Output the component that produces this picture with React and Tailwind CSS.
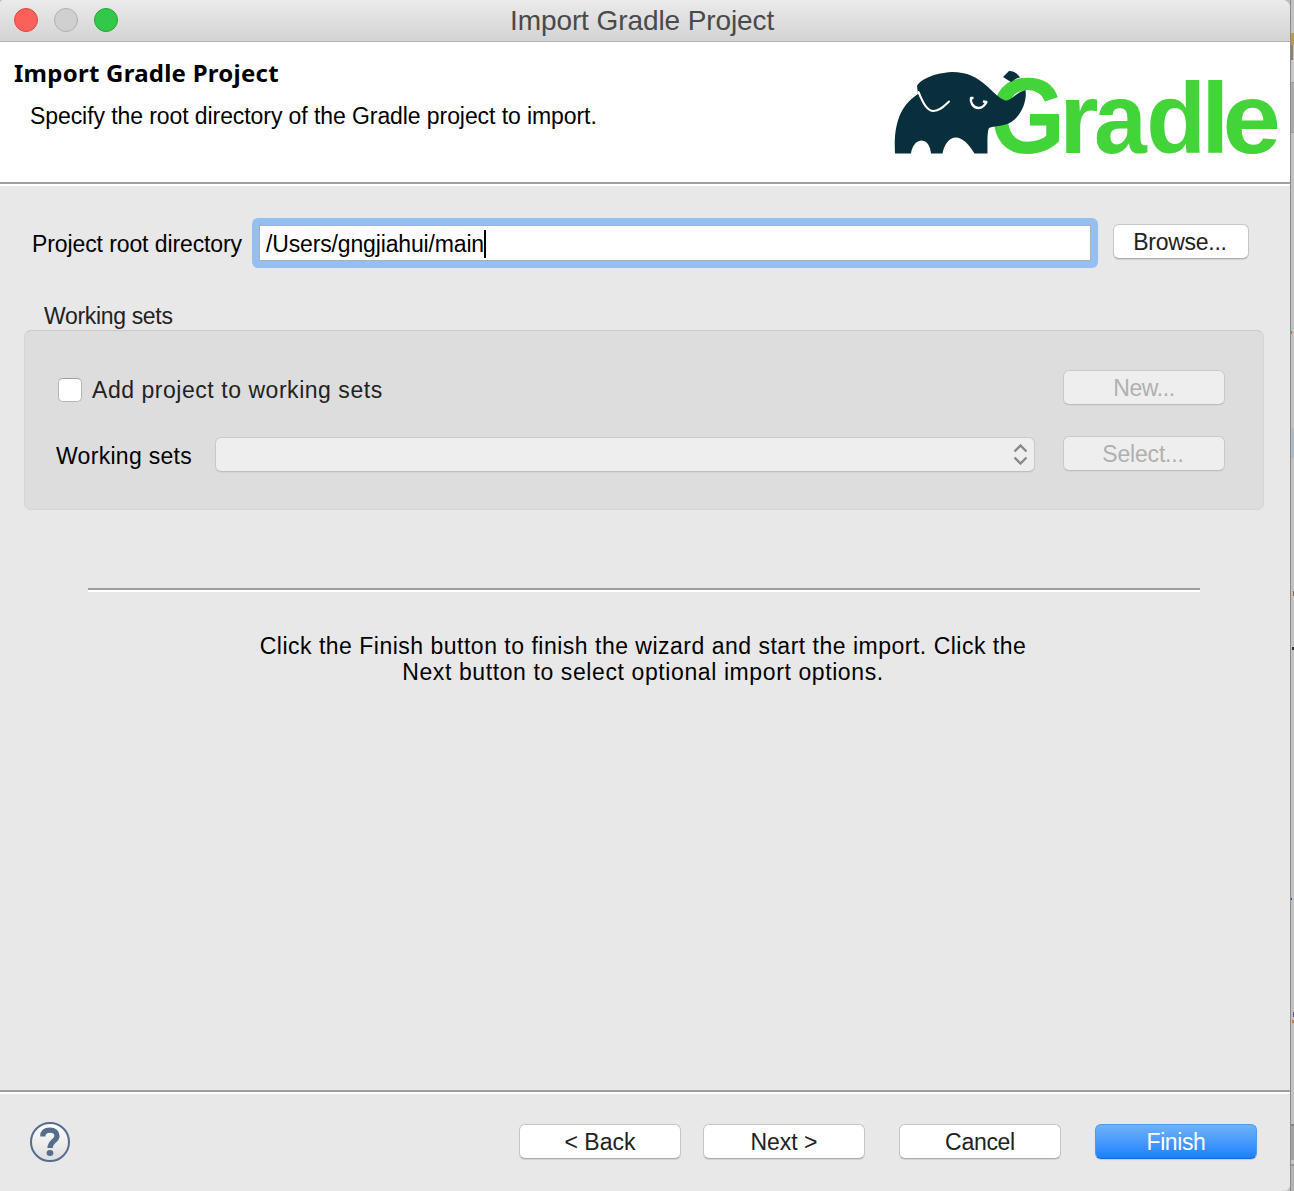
function Button({ children, className = "", text = "" }) {
  return (
    <button
      className={`box-border flex items-center justify-center rounded-[6px] border text-[23px] leading-[26px] ${className}`}
    >
      <span className={`relative ${text}`}>{children}</span>
    </button>
  );
}

const WHITE = "border-[#c6c6c6] border-b-[#acacac] bg-white text-[#222] shadow-[0_1px_1px_rgba(0,0,0,0.10)]";
const DISABLED = "border-[#c9c9c9] border-b-[#bdbdbd] bg-[#eeeeee] text-[#b0b0b0] shadow-[0_1px_1px_rgba(0,0,0,0.04)]";

function Logo() {
  return (
    <svg viewBox="0 0 400 124" className="h-[124px] w-[400px] overflow-visible" aria-label="Gradle">
      <g fill="#43d43a" fontFamily="Liberation Sans" fontWeight="700" fontSize="101">
        <text transform="translate(109.6 93.3) scale(0.9 1)" fontSize="108">G</text>
        <text transform="translate(179.3 93.3)">r</text>
        <text transform="translate(214 93.3) scale(0.94 1)">a</text>
        <text transform="translate(266.2 93.3) scale(0.97 1)">d</text>
        <text transform="translate(321.3 93.3)">l</text>
        <text transform="translate(342.500 93.3) scale(1.04 1)">e</text>
      </g>
      <path
        fill="#082f3b"
        d="M15 93.500 C14 72 16 48 38 34 L37 26 C40 20 53 13 72 12 C87 12 97 17 108 27 C114 33 119 38 125 40.500 C131 41 135 33 145.500 30 C147 39 143 52 134 60 C126 67 117 65 109 68 C107 72 107.500 83 107.500 93.500 H94.500 C89 84 82 77 75 77.500 C69 78 64 85 62.500 93.500 H51 C50 84 46 80.500 41 80.500 C36 81 32 86 31 93.500 Z"
      />
      <path fill="#082f3b" d="M123 17 L129 11 C134 11 138 14 140 17.500 C136 18 134 20 131 22 Z" />
      <path d="M38.500 32 C43 43 47 51 53.500 51 C60 51 64 46 69 41.500" fill="none" stroke="#fff" strokeWidth="2" strokeLinecap="round" />
      <path d="M93.500 38 L91 38 C90 42 93 48 98.500 48 C103 48 105 45 106.500 42 L103 41.500" fill="none" stroke="#fff" strokeWidth="2.400" strokeLinejoin="round" />
    </svg>
  );
}

function Backdrop() {
  return (
    <div className="flex w-[4px] shrink-0 flex-col border-l border-[#8b8b8b] bg-[#c2c2c2]">
      <div className="h-[33px]" />
      <div className="h-[12px] bg-[#b39a58]" />
      <div className="h-[15px] w-[2px] bg-[#8b826d]" />
      <div className="h-[22px] bg-[#c7c7c7]" />
      <div className="h-[51px] border-t border-b border-[#999] bg-[#aaa]" />
      <div className="h-[198px]" />
      <div className="h-[3px] w-[1px] bg-[#c86440]" />
      <div className="h-[94px]" />
      <div className="h-[30px] bg-[#aebbc6]" />
      <div className="h-[133px]" />
      <div className="ml-auto h-[5px] w-px bg-[#907345]" />
      <div className="h-[51px]" />
      <div className="ml-auto h-[3px] w-[2px] bg-[#3d3020]" />
      <div className="h-[248px]" />
      <div className="h-[2px] w-px bg-[#254d9c]" />
      <div className="h-[112px]" />
      <div className="ml-auto h-[5px] w-px bg-[#604a8f]" />
      <div className="h-[3px]" />
      <div className="ml-auto h-[3px] w-[2px] bg-[#d07850]" />
      <div className="h-[101px]" />
      <div className="h-[36px] border-t-2 border-[#858585] bg-[#a2a2a2]" />
      <div className="h-[4px] bg-[#c8c8c8]" />
      <div className="h-[2px] bg-[#969696]" />
      <div className="grow bg-[#b4b4b4]" />
    </div>
  );
}

export default function App() {
  return (
    <div className="flex h-[1191px] w-[1294px] overflow-hidden bg-[#bdbdbd] font-['Liberation_Sans',sans-serif] text-[23px] leading-[26px] text-black">
      <div className="flex w-[1290px] shrink-0 flex-col overflow-hidden rounded-tl-[4px] rounded-tr-[8px] rounded-br-[6px] bg-[#e8e8e8]">
        <header className="flex h-[42px] shrink-0 items-center border-b border-[#b1b1b1] bg-gradient-to-b from-[#ebebeb] to-[#d3d3d3] pl-[14px]">
          <div className="flex gap-4 pb-[2px]">
            <span className="h-6 w-6 rounded-full border border-[#e2463f] bg-[#fc605b]" />
            <span className="h-6 w-6 rounded-full border border-[#b0b0b0] bg-[#d0d0d0]" />
            <span className="h-6 w-6 rounded-full border border-[#23a833] bg-[#34c84a]" />
          </div>
          <h1 className="ml-[392px] whitespace-nowrap text-[28px] leading-[30px] tracking-[-0.09px] text-[#4a4a4a]">Import Gradle Project</h1>
        </header>

        <section className="flex h-[142px] shrink-0 justify-between border-b-2 border-[#9e9e9e] bg-white">
          <div className="pt-[15px] pl-[14px]">
            <h2 className="font-['Noto_Sans'] text-[24px] leading-[32px] font-bold tracking-[0.25px] whitespace-nowrap">Import Gradle Project</h2>
            <p className="mt-[14px] ml-4 whitespace-nowrap tracking-[-0.08px]">Specify the root directory of the Gradle project to import.</p>
          </div>
          <div className="mt-[18px] mr-[10px]"><Logo /></div>
        </section>
        <div className="h-[2px] shrink-0 bg-white" />

        <main className="flex grow flex-col">
          <div className="mt-[32px] flex h-[50px] items-center pl-8">
            <label className="w-[220px] shrink-0 pt-[2px] whitespace-nowrap tracking-[-0.1px]">Project root directory</label>
            <div className="h-[50px] w-[846px] shrink-0 rounded-[6px] bg-[#95bff0] p-[7px]">
              <div className="flex h-[36px] items-center border border-[#b0b0b0] bg-white pl-[6px]">
                <span className="relative top-[1px] tracking-[-0.15px]">/Users/gngjiahui/main</span>
                <span className="relative top-[1px] h-[28px] w-[2px] bg-black" />
              </div>
            </div>
            <Button className={`mb-[3px] ml-[15px] h-[35px] w-[136px] ${WHITE}`} text="tracking-[-0.27px] right-[1px]">Browse...</Button>
          </div>

          <div className="mt-[35px] mb-px ml-[44px] h-[26px] tracking-[-0.33px] text-[#222]">Working sets</div>
          <div className="ml-6 h-[180px] w-[1240px] rounded-[7px] border border-[#d4d4d4] border-t-[#cbcbcb] bg-[#dddddd] pt-[39px] pr-[38px] pl-[31px]">
            <div className="flex h-[36px] items-center justify-between">
              <label className="flex items-center pt-[4px] text-[#222]">
                <span className="mb-px ml-[2px] h-[24px] w-[24px] rounded-[5px] border border-[#b5b5b5] border-t-[#a0a0a0] bg-white" />
                <span className="ml-[10px] tracking-[0.54px]">Add project to working sets</span>
              </label>
              <Button className={`mb-[2px] h-[35px] w-[162px] ${DISABLED}`} text="top-[1px] tracking-[-0.4px]">New...</Button>
            </div>
            <div className="mt-[30px] flex h-[36px] items-center">
              <label className="w-[159px] pt-[4px] tracking-[0.3px]">Working sets</label>
              <div className={`flex h-[35px] w-[820px] items-center justify-end rounded-[6px] border pr-[6px] ${DISABLED}`}>
                <svg width="15" height="21" viewBox="0 0 15 21" fill="none" stroke="#888" strokeWidth="2.400">
                  <path d="M1.500 7.500 L7.500 1.500 L13.500 7.500 M1.500 13.500 L7.500 19.500 L13.500 13.500" />
                </svg>
              </div>
              <Button className={`mb-[2px] ml-auto h-[35px] w-[162px] ${DISABLED}`} text="top-[1px] right-[1px] tracking-[-0.2px]">Select...</Button>
            </div>
          </div>

          <div className="mt-[78px] ml-[88px] h-[4px] w-[1112px] border-b-2 border-white bg-[#9e9e9e]" />
          <p className="mt-[41px] w-[1286px] text-center tracking-[0.5px]">
            Click the Finish button to finish the wizard and start the import. Click the
            <br />
            <span className="tracking-[0.6px]">Next button to select optional import options.</span>
          </p>
        </main>

        <footer className="flex h-[101px] shrink-0 flex-col border-t-2 border-[#9e9e9e]">
          <div className="h-[2px] bg-white" />
          <div className="flex items-start pt-[30px] pl-[30px]">
            <svg width="40" height="40" viewBox="0 0 40 40" className="-mt-[2px]">
              <defs>
                <linearGradient id="help" x1="0" y1="0" x2="0" y2="1">
                  <stop offset="0" stopColor="#fff" />
                  <stop offset="1" stopColor="#ddd" />
                </linearGradient>
              </defs>
              <circle cx="20" cy="20" r="19" fill="url(#help)" stroke="#566c8c" strokeWidth="2" />
              <path d="M12.800 14.500 C12.800 10 15.500 8.200 20 8.200 C24.500 8.200 27 10.500 27 14 C27 19 20 19 20 26" fill="none" stroke="#566c8c" strokeWidth="5.200" />
              <ellipse cx="20" cy="31" rx="3.400" ry="3" fill="#566c8c" />
            </svg>
            <Button className={`ml-[449px] h-[35px] w-[162px] ${WHITE}`}>&lt; Back</Button>
            <Button className={`ml-[22px] h-[35px] w-[162px] ${WHITE}`}>Next &gt;</Button>
            <Button className={`ml-[34px] h-[35px] w-[162px] ${WHITE}`} text="tracking-[-0.3px]">Cancel</Button>
            <Button className="ml-[34px] h-[35px] w-[162px] border-[#4c9bee] border-b-[#1268ee] bg-gradient-to-b from-[#6db3f8] to-[#1780fd] text-white shadow-[0_1px_1px_rgba(0,0,0,0.12)]" text="tracking-[-0.4px]">Finish</Button>
          </div>
        </footer>
      </div>
      <Backdrop />
    </div>
  );
}
